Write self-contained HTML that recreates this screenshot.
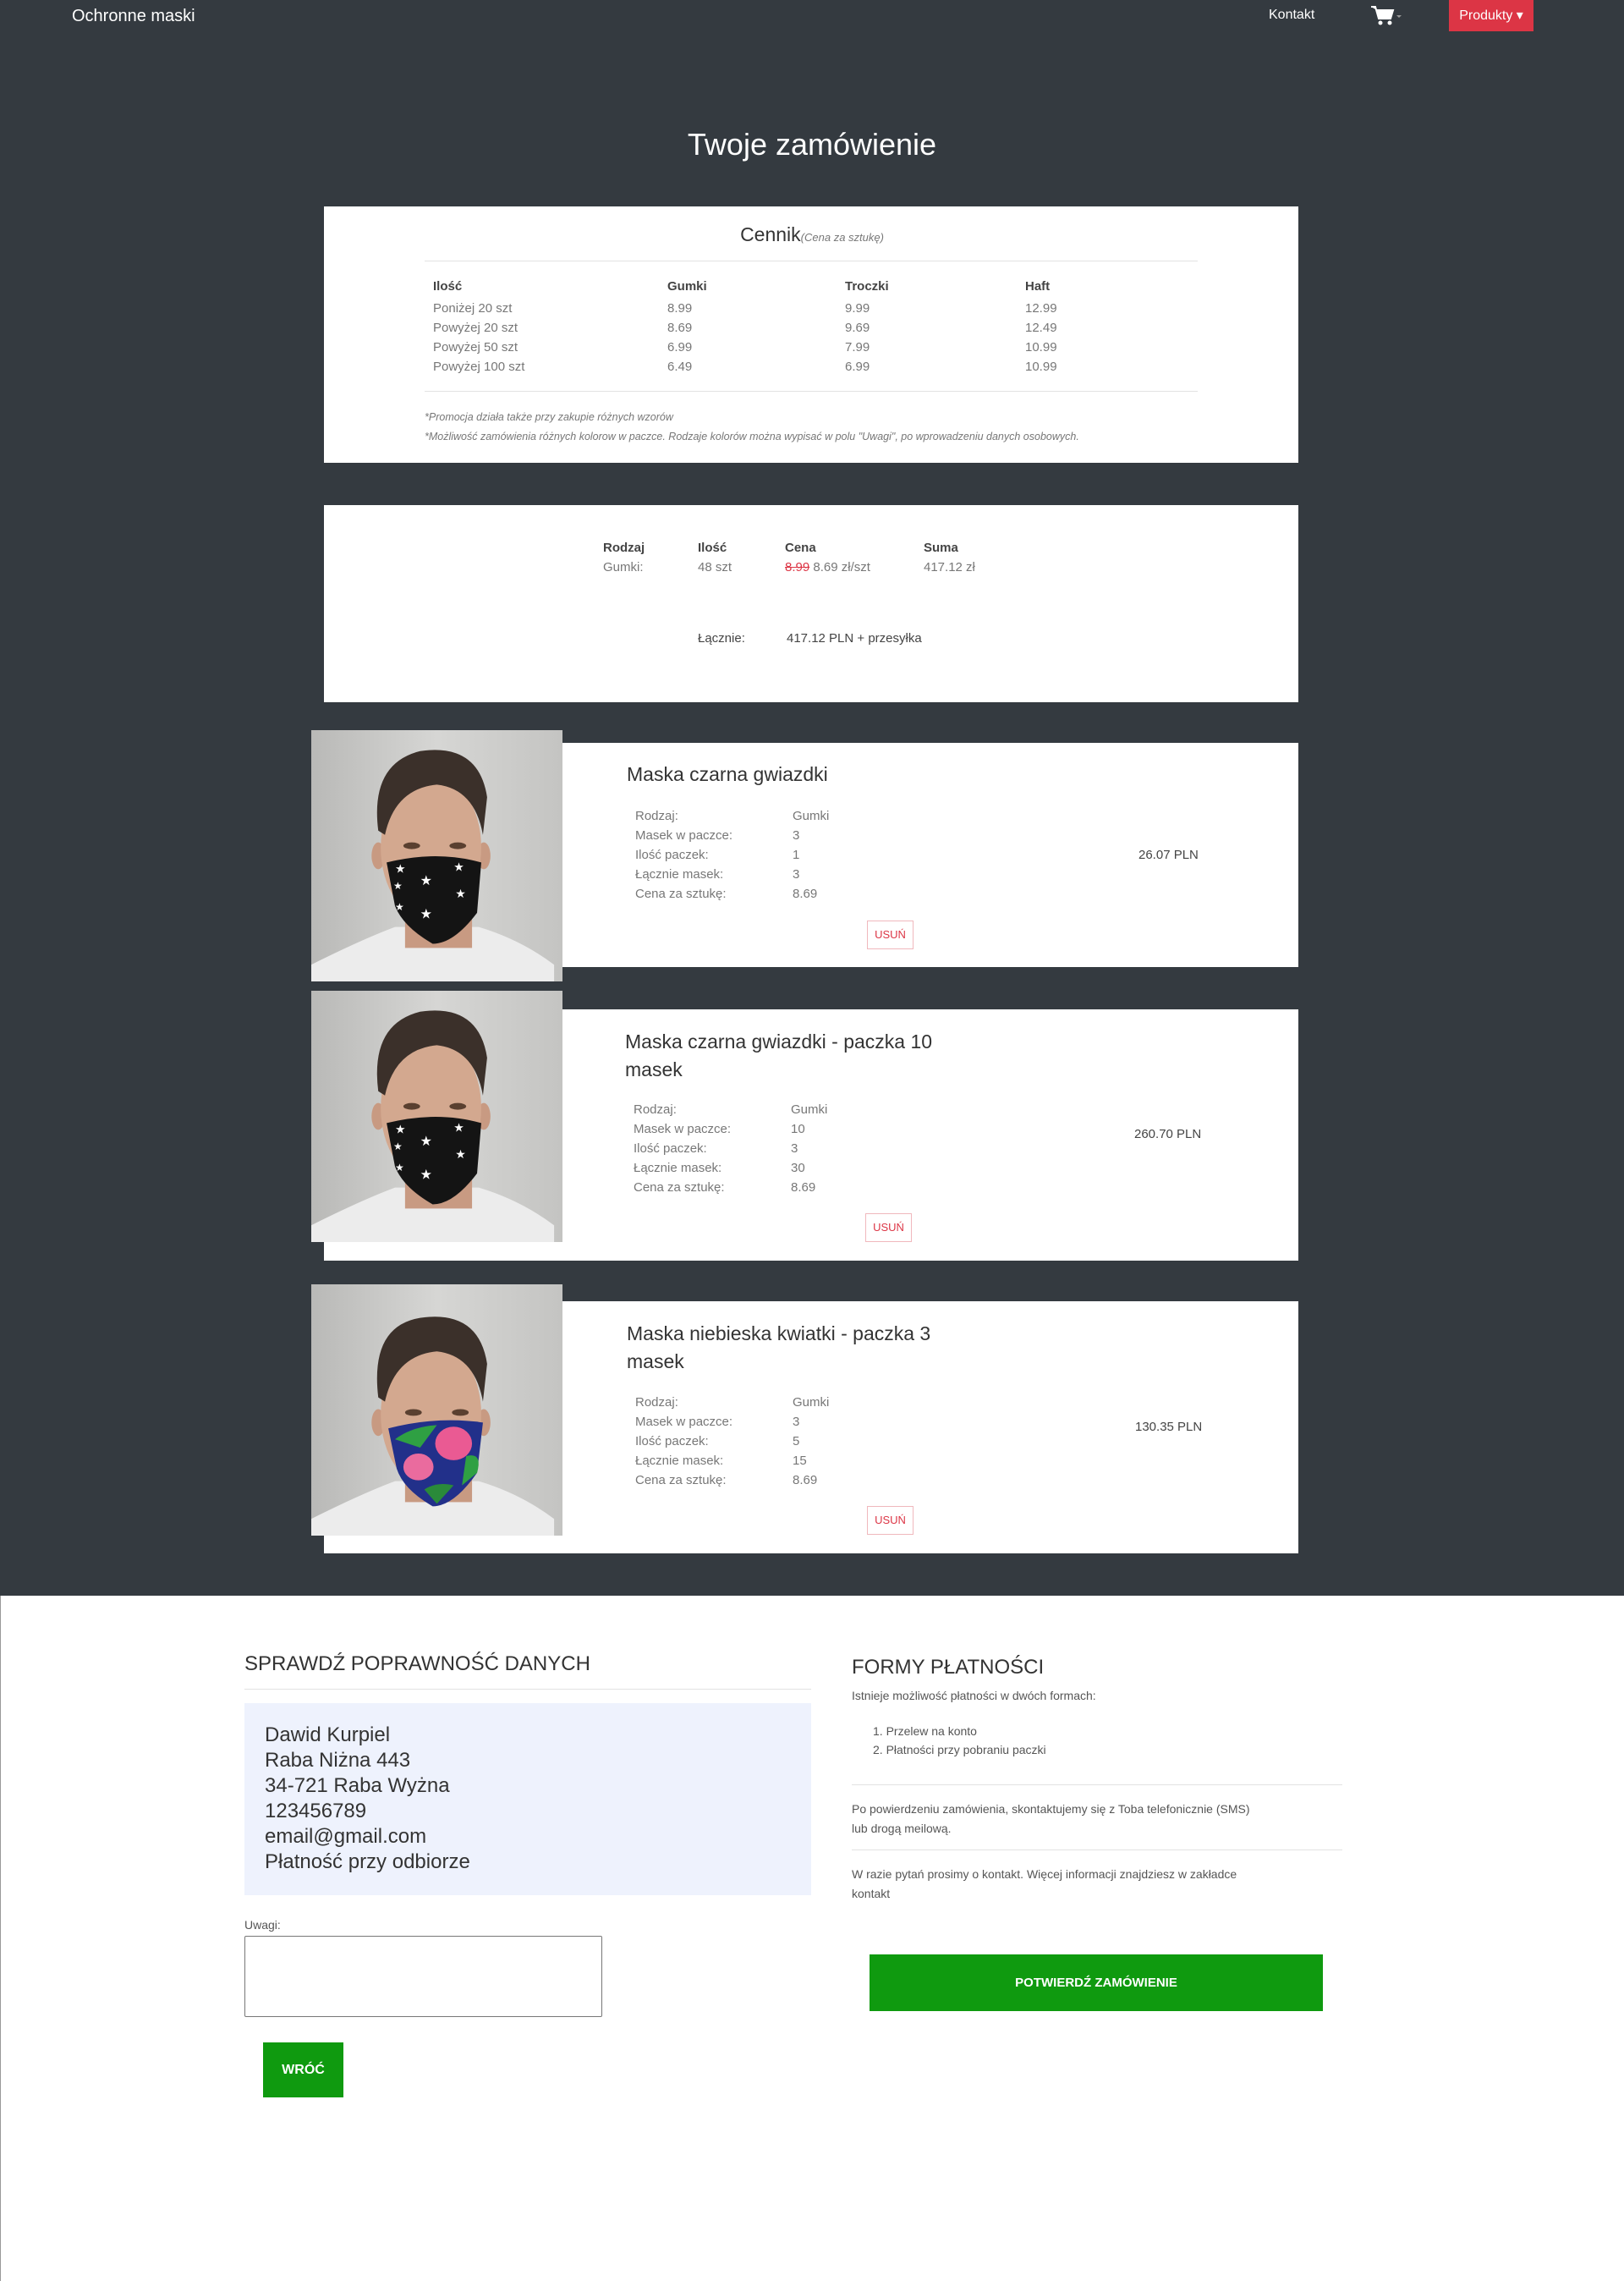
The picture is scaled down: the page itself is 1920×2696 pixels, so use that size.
<!DOCTYPE html>
<html><head><meta charset="utf-8">
<style>
*{margin:0;padding:0;box-sizing:border-box}
body{width:1920px;height:2696px;position:relative;background:#fff;font-family:"Liberation Sans",sans-serif;color:#555;overflow:hidden}
.a{position:absolute;white-space:nowrap}
#dark{position:absolute;left:0;top:0;width:1920px;height:1886px;background:#343a40}
.card{position:absolute;background:#fff}
.th{font-size:15px;color:#444;font-weight:bold}
.td{font-size:15px;color:#777}
.photo{position:absolute;width:297px;height:297px}
.usun{position:absolute;width:55px;height:34px;border:1px solid #f0b8bd;color:#dc3545;font-size:13px;text-align:center;line-height:32px}
.pt{font-size:23px;color:#333;line-height:33px}
.lbl{font-size:15px;color:#777;line-height:23px}
</style></head><body>
<div id="dark"></div>
<div class="a" style="left:85px;top:8px;font-size:20px;color:#fff">Ochronne maski</div>
<div class="a" style="left:1500px;top:9px;font-size:16px;color:#fff">Kontakt</div>
<svg class="a" style="left:1620px;top:6px" width="40" height="26" viewBox="0 0 40 26"><path d="M1 2h5l4 14h14l3-10H8" fill="#fff" stroke="#fff" stroke-width="2"/><circle cx="12" cy="21" r="2.5" fill="#fff"/><circle cx="23" cy="21" r="2.5" fill="#fff"/><path d="M31 12h6l-3 3z" fill="#999"/></svg>
<div class="a" style="left:1713px;top:0;width:100px;height:37px;background:#dc3545;color:#fff;font-size:16px;line-height:37px;text-align:center">Produkty ▾</div>
<div class="a" style="left:0;width:1920px;top:150px;text-align:center;font-size:36px;color:#fff">Twoje zamówienie</div>

<div class="card" style="left:383px;top:244px;width:1152px;height:303px"></div>
<div class="a" style="left:0;width:1920px;top:264px;text-align:center;font-size:23px;color:#333">Cennik<i style="font-size:13px;color:#777">(Cena za sztukę)</i></div>
<div class="a" style="left:502px;top:308px;width:914px;height:1px;background:#e2e2e2"></div>
<div class="a" style="left:502px;top:462px;width:914px;height:1px;background:#e2e2e2"></div>
<div class="a th" style="left:512px;top:330px">Ilość</div><div class="a th" style="left:789px;top:330px">Gumki</div><div class="a th" style="left:999px;top:330px">Troczki</div><div class="a th" style="left:1212px;top:330px">Haft</div>
<div class="a td" style="left:512px;top:353px;line-height:23px">Poniżej 20 szt<br>Powyżej 20 szt<br>Powyżej 50 szt<br>Powyżej 100 szt</div>
<div class="a td" style="left:789px;top:353px;line-height:23px">8.99<br>8.69<br>6.99<br>6.49</div>
<div class="a td" style="left:999px;top:353px;line-height:23px">9.99<br>9.69<br>7.99<br>6.99</div>
<div class="a td" style="left:1212px;top:353px;line-height:23px">12.99<br>12.49<br>10.99<br>10.99</div>
<div class="a" style="left:502px;top:482px;font-size:12.5px;font-style:italic;color:#777;line-height:23px">*Promocja działa także przy zakupie różnych wzorów<br>*Możliwość zamówienia różnych kolorow w paczce. Rodzaje kolorów można wypisać w polu "Uwagi", po wprowadzeniu danych osobowych.</div>

<div class="card" style="left:383px;top:597px;width:1152px;height:233px"></div>
<div class="a th" style="left:713px;top:639px">Rodzaj</div><div class="a th" style="left:825px;top:639px">Ilość</div><div class="a th" style="left:928px;top:639px">Cena</div><div class="a th" style="left:1092px;top:639px">Suma</div>
<div class="a td" style="left:713px;top:662px">Gumki:</div><div class="a td" style="left:825px;top:662px">48 szt</div><div class="a td" style="left:928px;top:662px"><s style="color:#dc3545">8.99</s> 8.69 zł/szt</div><div class="a td" style="left:1092px;top:662px">417.12 zł</div>
<div class="a" style="left:825px;top:746px;font-size:15px;color:#444">Łącznie:</div><div class="a" style="left:930px;top:746px;font-size:15px;color:#444">417.12 PLN + przesyłka</div>

<!-- card 1 -->
<div class="card" style="left:665px;top:878px;width:870px;height:265px"></div>
<svg class="photo" style="left:368px;top:863px" viewBox="0 0 300 300"><defs><linearGradient id="bg" x1="0" x2="1"><stop offset="0" stop-color="#b9b9b7"/><stop offset=".5" stop-color="#d6d6d4"/><stop offset="1" stop-color="#c4c4c2"/></linearGradient></defs><rect width="300" height="300" fill="url(#bg)"/><path d="M0 300L0 280Q60 250 100 235L200 235Q250 250 290 280L290 300Z" fill="#ececec"/><rect x="112" y="200" width="80" height="60" fill="#c89a82"/><ellipse cx="80" cy="150" rx="8" ry="16" fill="#c89a82"/><ellipse cx="206" cy="150" rx="8" ry="16" fill="#c89a82"/><ellipse cx="143" cy="140" rx="60" ry="88" fill="#d3a88f"/><path d="M80 120Q70 40 130 25Q200 15 210 80L205 125Q195 70 150 65Q100 70 88 125Z" fill="#3b302a"/><ellipse cx="120" cy="138" rx="10" ry="4" fill="#5a4030"/><ellipse cx="175" cy="138" rx="10" ry="4" fill="#5a4030"/><path d="M90 158Q150 143 203 158L198 218Q170 255 145 255Q110 235 100 210Z" fill="#141414"/><g fill="#fff"><text x="100" y="170" font-size="14">★</text><text x="170" y="168" font-size="14">★</text><text x="130" y="185" font-size="16">★</text><text x="172" y="200" font-size="14">★</text><text x="98" y="190" font-size="12">★</text><text x="130" y="225" font-size="16">★</text><text x="100" y="215" font-size="12">★</text></g></svg>
<div class="a pt" style="left:741px;top:899px">Maska czarna gwiazdki</div>
<div class="a lbl" style="left:751px;top:953px">Rodzaj:<br>Masek w paczce:<br>Ilość paczek:<br>Łącznie masek:<br>Cena za sztukę:</div>
<div class="a lbl" style="left:937px;top:953px">Gumki<br>3<br>1<br>3<br>8.69</div>
<div class="a" style="left:1346px;top:1002px;font-size:15px;color:#444">26.07 PLN</div>
<div class="usun" style="left:1025px;top:1088px">USUŃ</div>

<!-- card 2 -->
<div class="card" style="left:383px;top:1193px;width:1152px;height:297px"></div>
<svg class="photo" style="left:368px;top:1171px" viewBox="0 0 300 300"><rect width="300" height="300" fill="url(#bg)"/><path d="M0 300L0 280Q60 250 100 235L200 235Q250 250 290 280L290 300Z" fill="#ececec"/><rect x="112" y="200" width="80" height="60" fill="#c89a82"/><ellipse cx="80" cy="150" rx="8" ry="16" fill="#c89a82"/><ellipse cx="206" cy="150" rx="8" ry="16" fill="#c89a82"/><ellipse cx="143" cy="140" rx="60" ry="88" fill="#d3a88f"/><path d="M80 120Q70 40 130 25Q200 15 210 80L205 125Q195 70 150 65Q100 70 88 125Z" fill="#3b302a"/><ellipse cx="120" cy="138" rx="10" ry="4" fill="#5a4030"/><ellipse cx="175" cy="138" rx="10" ry="4" fill="#5a4030"/><path d="M90 158Q150 143 203 158L198 218Q170 255 145 255Q110 235 100 210Z" fill="#141414"/><g fill="#fff"><text x="100" y="170" font-size="14">★</text><text x="170" y="168" font-size="14">★</text><text x="130" y="185" font-size="16">★</text><text x="172" y="200" font-size="14">★</text><text x="98" y="190" font-size="12">★</text><text x="130" y="225" font-size="16">★</text><text x="100" y="215" font-size="12">★</text></g></svg>
<div class="a pt" style="left:739px;top:1215px">Maska czarna gwiazdki - paczka 10<br>masek</div>
<div class="a lbl" style="left:749px;top:1300px">Rodzaj:<br>Masek w paczce:<br>Ilość paczek:<br>Łącznie masek:<br>Cena za sztukę:</div>
<div class="a lbl" style="left:935px;top:1300px">Gumki<br>10<br>3<br>30<br>8.69</div>
<div class="a" style="left:1341px;top:1332px;font-size:15px;color:#444">260.70 PLN</div>
<div class="usun" style="left:1023px;top:1434px">USUŃ</div>

<!-- card 3 -->
<div class="card" style="left:383px;top:1538px;width:1152px;height:298px"></div>
<svg class="photo" style="left:368px;top:1518px" viewBox="0 0 300 300"><rect width="300" height="300" fill="url(#bg)"/><path d="M0 300L0 280Q60 250 100 235L200 235Q250 250 290 280L290 300Z" fill="#ececec"/><rect x="112" y="200" width="80" height="60" fill="#c89a82"/><ellipse cx="80" cy="165" rx="8" ry="16" fill="#c89a82"/><ellipse cx="206" cy="165" rx="8" ry="16" fill="#c89a82"/><ellipse cx="143" cy="155" rx="60" ry="88" fill="#d3a88f"/><path d="M80 135Q70 50 130 40Q200 30 210 95L205 140Q195 85 150 80Q100 85 88 140Z" fill="#3b302a"/><ellipse cx="122" cy="153" rx="10" ry="4" fill="#5a4030"/><ellipse cx="178" cy="153" rx="10" ry="4" fill="#5a4030"/><path d="M92 172Q150 157 205 165L198 225Q170 265 145 265Q110 245 102 220Z" fill="#22308a"/><path d="M100 185Q120 170 150 168L130 195Z" fill="#2fa043"/><ellipse cx="170" cy="190" rx="22" ry="20" fill="#ea5a93"/><ellipse cx="128" cy="218" rx="18" ry="16" fill="#ea6b9e"/><path d="M185 205Q205 200 198 225L180 240Z" fill="#2fa043"/><path d="M135 245Q150 235 170 240L150 262Z" fill="#2a8a3a"/></svg>
<div class="a pt" style="left:741px;top:1560px">Maska niebieska kwiatki - paczka 3<br>masek</div>
<div class="a lbl" style="left:751px;top:1646px">Rodzaj:<br>Masek w paczce:<br>Ilość paczek:<br>Łącznie masek:<br>Cena za sztukę:</div>
<div class="a lbl" style="left:937px;top:1646px">Gumki<br>3<br>5<br>15<br>8.69</div>
<div class="a" style="left:1342px;top:1678px;font-size:15px;color:#444">130.35 PLN</div>
<div class="usun" style="left:1025px;top:1780px">USUŃ</div>

<!-- bottom -->
<div class="a" style="left:0;top:1886px;width:1px;height:810px;background:#999"></div>
<div class="a" style="left:289px;top:1953px;font-size:24px;color:#333">SPRAWDŹ POPRAWNOŚĆ DANYCH</div>
<div class="a" style="left:289px;top:1996px;width:670px;height:1px;background:#e2e2e2"></div>
<div class="a" style="left:289px;top:2013px;width:670px;height:227px;background:#eef2fd"></div>
<div class="a" style="left:313px;top:2036px;font-size:24px;line-height:30px;color:#333">Dawid Kurpiel<br>Raba Niżna 443<br>34-721 Raba Wyżna<br>123456789<br>email@gmail.com<br>Płatność przy odbiorze</div>
<div class="a" style="left:289px;top:2267px;font-size:14px;color:#555">Uwagi:</div>
<div class="a" style="left:289px;top:2288px;width:423px;height:96px;border:1px solid #777;border-radius:2px;background:#fff"></div>
<div class="a" style="left:311px;top:2414px;width:95px;height:65px;background:#0f9a0f;color:#fff;font-weight:bold;font-size:16px;text-align:center;line-height:65px">WRÓĆ</div>

<div class="a" style="left:1007px;top:1957px;font-size:24px;color:#333">FORMY PŁATNOŚCI</div>
<div class="a" style="left:1007px;top:1996px;font-size:14px;color:#555">Istnieje możliwość płatności w dwóch formach:</div>
<div class="a" style="left:1032px;top:2035px;font-size:14px;color:#555;line-height:22px">1. Przelew na konto<br>2. Płatności przy pobraniu paczki</div>
<div class="a" style="left:1007px;top:2109px;width:580px;height:1px;background:#e2e2e2"></div>
<div class="a" style="left:1007px;top:2127px;font-size:14px;color:#555;line-height:23px">Po powierdzeniu zamówienia, skontaktujemy się z Toba telefonicznie (SMS)<br>lub drogą meilową.</div>
<div class="a" style="left:1007px;top:2186px;width:580px;height:1px;background:#e2e2e2"></div>
<div class="a" style="left:1007px;top:2204px;font-size:14px;color:#555;line-height:23px">W razie pytań prosimy o kontakt. Więcej informacji znajdziesz w zakładce<br>kontakt</div>
<div class="a" style="left:1028px;top:2310px;width:536px;height:67px;background:#0f9a0f;color:#fff;font-weight:bold;font-size:15px;text-align:center;line-height:67px">POTWIERDŹ ZAMÓWIENIE</div>
</body></html>
